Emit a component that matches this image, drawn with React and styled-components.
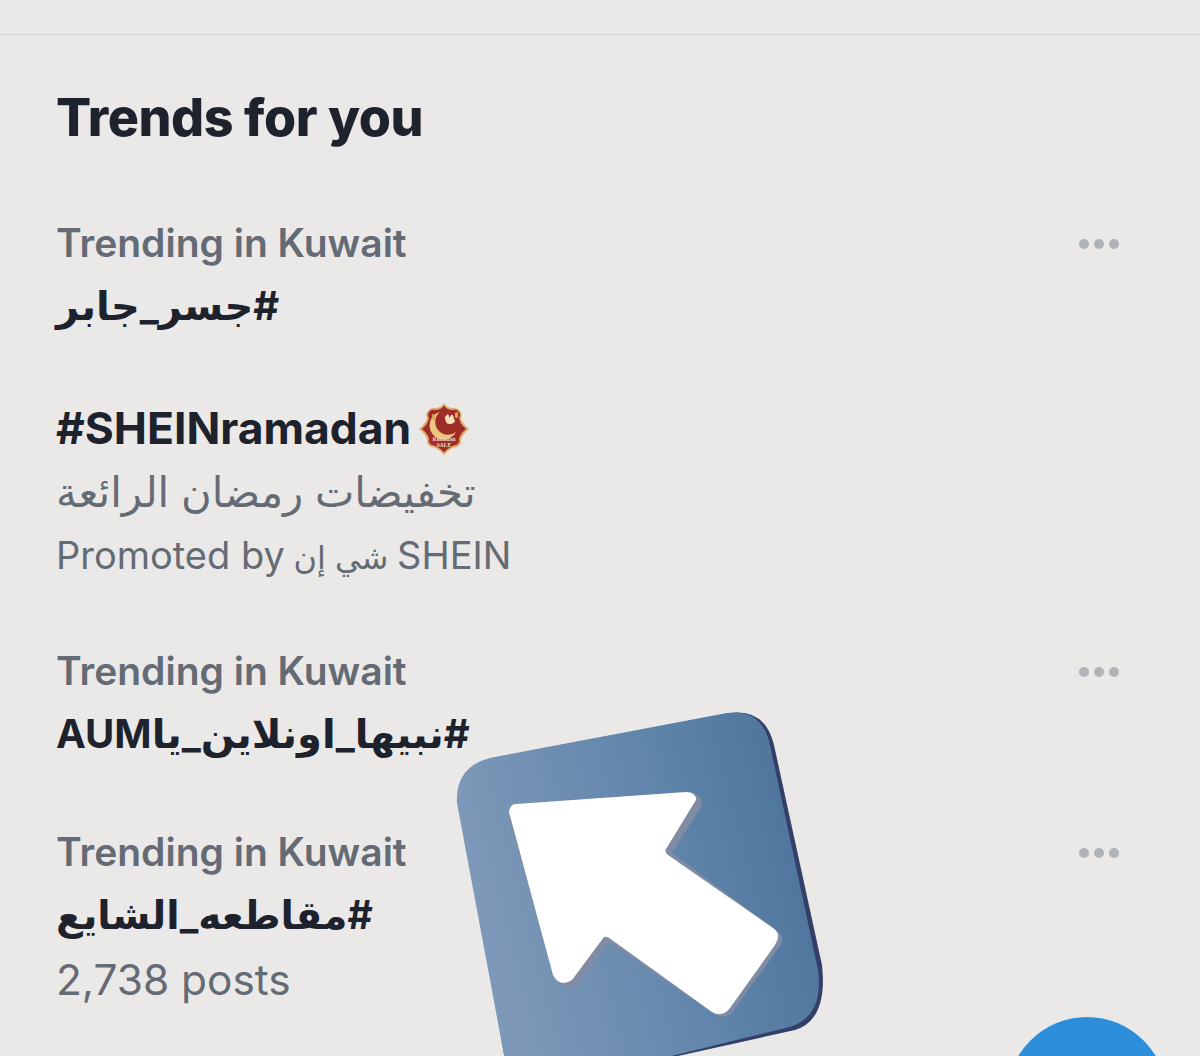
import React from "react";
import styled, { createGlobalStyle } from "styled-components";

const DARK = "#1d222c";
const GRAY = "#646b74";

const trends = [
  { id: 1, meta: "Trending in Kuwait", title: "#جسر_جابر", rtl: true, size: 40, gap: 0 },
  {
    id: 2,
    title: "#SHEINramadan",
    size: 44.4,
    badge: true,
    subtitle: "تخفيضات رمضان الرائعة",
    promoted: true,
    gap: 60,
  },
  { id: 3, meta: "Trending in Kuwait", title: "#نبيها_اونلاين_ياAUM", rtl: true, size: 40, gap: 50 },
  {
    id: 4,
    meta: "Trending in Kuwait",
    title: "#مقاطعه_الشايع",
    rtl: true,
    size: 39,
    posts: "2,738 posts",
    gap: 55,
  },
];

function RamadanBadge() {
  return (
    <BadgeIcon viewBox="0 0 50 52" aria-hidden="true">
      <path
        d="M25 0 Q28 5 34 5 Q38 4 41 8 Q44 11 42 15 Q43 20 50 26 Q43 32 42 37 Q43 41 38 44 Q32 44 25 52 Q18 44 12 44 Q7 41 8 37 Q7 32 0 26 Q7 20 8 15 Q6 11 9 8 Q12 4 16 5 Q22 5 25 0Z"
        fill="#dcae74"
      />
      <path
        d="M25 2.5 Q28 7 34 7 Q38 6 40 9 Q42 12 40 15 Q41 21 47 26 Q41 31 40 36 Q41 40 37 42 Q31 43 25 49.5 Q19 43 13 42 Q9 40 10 36 Q9 31 3 26 Q9 21 10 15 Q8 12 10 9 Q12 6 16 7 Q22 7 25 2.5Z"
        fill="#a02c27"
      />
      <path d="M21 9 A14 14 0 1 0 37 29 A12.5 12.5 0 0 1 21 9Z" fill="#eac680" />
      <path d="M26 14 Q30 8 30 15 Q34 8 35 16 Q38 19 32 21 Q26 22 26 14Z" fill="#f4e2bd" />
      <rect x="13" y="11" width="3" height="6" rx="1.5" fill="#dfa45f" />
      <rect x="36" y="9" width="3" height="6" rx="1.5" fill="#dfa45f" />
      <BadgeText x="25" y="37.5" fontSize="5.5">Ramadan</BadgeText>
      <BadgeText x="25" y="44" fontSize="5.5" fontWeight="700">SALE</BadgeText>
    </BadgeIcon>
  );
}

function ArrowSticker() {
  return (
    <Sticker viewBox="440 700 400 356" aria-hidden="true">
      <defs>
        <linearGradient id="stickerFill" x1="0" y1="0.25" x2="1" y2="0">
          <stop offset="0" stopColor="#7d98b8" />
          <stop offset="0.55" stopColor="#5f84aa" />
          <stop offset="1" stopColor="#4a6f97" />
        </linearGradient>
      </defs>
      <path
        d="M460 803 Q458 767 492 758 L730 713 Q765 708 774 745 L822 965 Q828 1020 795 1030 L660 1060 L505 1060Z"
        fill="#343f69"
      />
      <path
        d="M457 803 Q455 767 490 758 L727 713 Q762 708 770 745 L818 970 Q824 1016 790 1027 L655 1060 L505 1060Z"
        fill="url(#stickerFill)"
      />
      <path
        d="M514 806 L690 793 Q704 794 701 807 L672 853 L777 931 Q786 937 780 946 L733 1011 Q724 1021 714 1014 L609 942 L578 984 Q568 991 558 983 L510 823 Q508 808 514 806Z"
        fill="#7f8ca3"
      />
      <path
        d="M516 804 Q510 804 509 812 L553 975 Q560 988 572 980 L604 937 Q607 936 612 940 L712 1012 Q722 1018 730 1008 L775 945 Q782 934 773 928 L668 855 Q664 851 666 849 L696 800 Q696 792 686 792Z"
        fill="#ffffff"
      />
    </Sticker>
  );
}

export default function App() {
  return (
    <Page>
      <GlobalStyle />
      <TopBar />
      <Heading>Trends for you</Heading>
      <TrendList>
        {trends.map((trend) => (
          <TrendRow key={trend.id} $gap={trend.gap}>
            <TrendBody>
              {trend.meta && <Meta>{trend.meta}</Meta>}
              <Title $size={trend.size} dir={trend.rtl ? "rtl" : "ltr"}>
                {trend.title}
                {trend.badge && <RamadanBadge />}
              </Title>
              {trend.subtitle && <Subtitle dir="rtl">{trend.subtitle}</Subtitle>}
              {trend.promoted && (
                <Promoted>
                  Promoted by <ArabicName>شي إن</ArabicName> SHEIN
                </Promoted>
              )}
              {trend.posts && <Posts>{trend.posts}</Posts>}
            </TrendBody>
            {trend.meta && (
              <MoreDots>
                <Dot />
                <Dot />
                <Dot />
              </MoreDots>
            )}
          </TrendRow>
        ))}
      </TrendList>
      <ArrowSticker />
      <ComposeButton />
    </Page>
  );
}

const GlobalStyle = createGlobalStyle`
  html, body {
    margin: 0;
    padding: 0;
    background: #ebe9e8;
  }
`;

const Page = styled.div`
  position: relative;
  width: 1200px;
  height: 1056px;
  overflow: hidden;
  background: #ebe9e8;
  font-family: Inter, "Noto Sans", "DejaVu Sans", sans-serif;
`;

const TopBar = styled.div`
  height: 34px;
  border-bottom: 1px solid #d2d1cf;
`;

const Heading = styled.h1`
  margin: 0;
  padding: 49px 0 0 56px;
  font-size: 52px;
  line-height: 68px;
  font-weight: 800;
  letter-spacing: -0.45px;
  color: ${DARK};
`;

const TrendList = styled.div`
  display: flex;
  flex-direction: column;
  padding: 59px 81px 0 56px;
`;

const TrendRow = styled.div`
  display: flex;
  justify-content: space-between;
  align-items: flex-start;
  margin-top: ${(props) => props.$gap}px;
`;

const TrendBody = styled.div`
  display: flex;
  flex-direction: column;
  align-items: flex-start;
`;

const Meta = styled.div`
  font-size: 39px;
  line-height: 63px;
  font-weight: 600;
  color: ${GRAY};
`;

const Title = styled.div`
  display: flex;
  align-items: center;
  gap: 8px;
  font-size: ${(props) => props.$size}px;
  line-height: 63px;
  font-weight: 700;
  color: ${DARK};
`;

const Subtitle = styled.div`
  font-size: 41.8px;
  line-height: 64px;
  color: ${GRAY};
`;

const Promoted = styled.div`
  font-size: 38px;
  line-height: 63px;
  color: ${GRAY};
`;

const ArabicName = styled.span`
  font-size: 32px;
  margin: 0 -2px;
`;

const Posts = styled.div`
  font-size: 42.4px;
  line-height: 67px;
  color: ${GRAY};
`;

const BadgeIcon = styled.svg`
  width: 50px;
  height: 52px;
`;

const BadgeText = styled.text`
  fill: #f3dfc0;
  text-anchor: middle;
  font-family: "Liberation Serif", serif;
`;

const MoreDots = styled.div`
  display: flex;
  gap: 5px;
  height: 65px;
  align-items: center;
`;

const Dot = styled.span`
  width: 10px;
  height: 10px;
  border-radius: 50%;
  background: #b0b4b8;
`;

const Sticker = styled.svg`
  position: absolute;
  left: 440px;
  top: 700px;
  width: 400px;
  height: 356px;
`;

const ComposeButton = styled.div`
  position: absolute;
  left: 1007px;
  top: 1017px;
  width: 160px;
  height: 160px;
  border-radius: 50%;
  background: #2d8fdb;
`;
